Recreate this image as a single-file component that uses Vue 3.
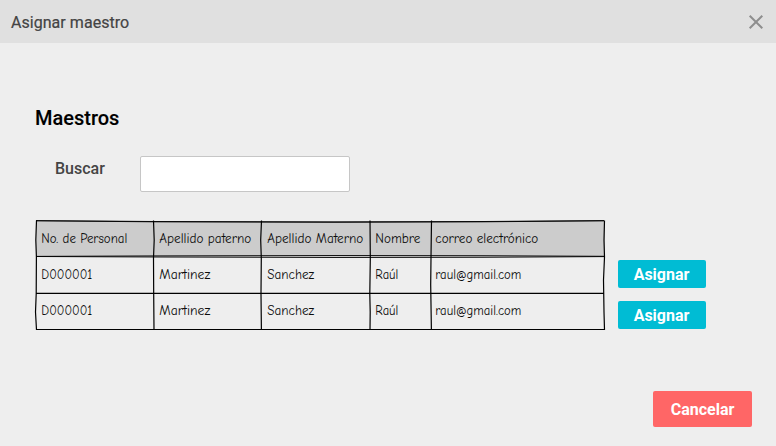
<script setup>
const headers = [
  { text: 'No. de Personal', w: 86 },
  { text: 'Apellido paterno', w: 92 },
  { text: 'Apellido Materno', w: 96 },
  { text: 'Nombre', w: 45 },
  { text: 'correo electrónico', w: 103 },
]
const teacher = [
  { text: 'D000001', w: 51 },
  { text: 'Martinez', w: 51 },
  { text: 'Sanchez', w: 47 },
  { text: 'Raúl', w: 23 },
  { text: 'raul@gmail.com', w: 86 },
]
const rows = [headers, teacher, teacher]
</script>

<template>
  <div class="dialog">
    <header class="titlebar">
      <span class="title">Asignar maestro</span>
      <svg class="close" width="16" height="16" viewBox="0 0 16 16">
        <path d="M1.7 1.7 L14.3 14.3 M14.3 1.7 L1.7 14.3" />
      </svg>
    </header>
    <main class="content">
      <h1>Maestros</h1>
      <div class="search">
        <label for="search">Buscar</label>
        <input id="search" type="text" />
      </div>
      <div class="listing">
        <div class="table">
          <div v-for="(row, r) in rows" :key="r" class="row" :class="{ head: r === 0 }">
            <div v-for="(cell, c) in row" :key="c" class="cell">
              <svg height="26" :width="cell.w + 4">
                <text x="0.3" y="17.3" :textLength="cell.w" lengthAdjust="spacingAndGlyphs">{{ cell.text }}</text>
              </svg>
            </div>
          </div>
          <svg class="lines" width="572" height="114" viewBox="0 0 572 114">
            <path class="thin" d="M2 0.6 L120 1.5 L300 2 L450 1.5 L570 0.6 M2 0.8 L120 1.8 L300 2.2 L450 1.8 L570 0.8" />
            <path class="thin" d="M2 36.5 L120 37 L300 37.5 L450 37.3 L570 36.6 M2 36.4 L120 35.9 L300 35.5 L450 35.7 L570 36.3" />
            <path d="M2 73.4 H570 M2 109.5 H570" />
            <path d="M2.5 0.5 L1.8 20 L2.4 37 L2.2 74 L1.5 92 L2.5 110" />
            <path d="M119.5 0.5 L120.2 20 L119.5 38 L119.7 74 L120 110" />
            <path d="M227.5 0.5 L226.7 20 L227.3 38 L227 74 L227.4 110" />
            <path d="M336 0.5 L336.3 38 L335.8 74 L336.2 92 L336 110" />
            <path d="M397.5 0.5 L397 38 L396.7 65 L397.4 110" />
            <path d="M570.5 0.5 L570 20 L570.5 37 L569.5 60 L570 92 L570.5 110" />
          </svg>
        </div>
        <div class="actions">
          <button v-for="n in 2" :key="n" class="assign">Asignar</button>
        </div>
      </div>
      <footer>
        <button class="cancel">Cancelar</button>
      </footer>
    </main>
  </div>
</template>

<style>
body { margin: 0; background: #eee; }
</style>

<style scoped>
.dialog {
  box-sizing: border-box;
  width: 776px;
  height: 446px;
  background: #eee;
  font-family: Roboto, sans-serif;
  overflow: hidden;
}
.titlebar {
  box-sizing: border-box;
  height: 43px;
  padding: 1px 12px 0 11px;
  display: flex;
  align-items: center;
  justify-content: space-between;
  background: #e0e0e0;
}
.title { padding-top: 2px; font-size: 16px; letter-spacing: 0.04px; line-height: 20px; color: #444; font-weight: 400; -webkit-text-stroke: 0.2px #444; }
.close path { stroke: #8e8e8e; stroke-width: 2; fill: none; }
.content { padding: 63px 24px 0 35px; }
h1 { margin: 0; font-size: 20px; line-height: 24px; font-weight: 500; color: #000; -webkit-text-stroke: 0.1px #000; }
.search { display: flex; margin-top: 26px; padding-left: 20px; height: 36px; }
label { width: 85px; font-size: 16px; line-height: 25px; font-weight: 500; color: #444; }
input {
  box-sizing: border-box;
  width: 210px;
  height: 36px;
  padding: 0 8px;
  border: 1px solid #c6c6c6;
  border-radius: 2px;
  background: #fff;
}
.listing { display: flex; margin-top: 29px; height: 109px; }
.table { position: relative; width: 570px; padding-left: 1px; box-sizing: border-box; }
.row { display: grid; grid-template-columns: 118px 108px 108px 60px 174px; height: 36px; }
.head { background: #ccc; }
.cell { display: flex; align-items: center; padding-left: 5px; }
.cell svg { flex: none; overflow: visible; }
.cell text {
  font-family: "Comic Sans MS", "Comic Neue", Lato, sans-serif;
  font-size: 13.5px;
  fill: #0c0c0c;
}
.lines { position: absolute; left: -1px; top: -1px; }
.lines path { fill: none; stroke: #000; stroke-width: 1.2; }
.lines .thin { stroke-width: 0.9; }
.actions { display: flex; flex-direction: column; gap: 13px; padding: 39px 0 0 13px; }
button { border: 0; padding: 2px 0 0; color: #fff; font: 700 16px/20px Roboto, sans-serif; border-radius: 2px; }
.assign { width: 88px; height: 28px; flex: none; padding-right: 1px; background: #00bcd4; }
footer { display: flex; justify-content: flex-end; margin-top: 61px; }
.cancel { width: 99px; height: 36px; background: #f66; }
</style>
